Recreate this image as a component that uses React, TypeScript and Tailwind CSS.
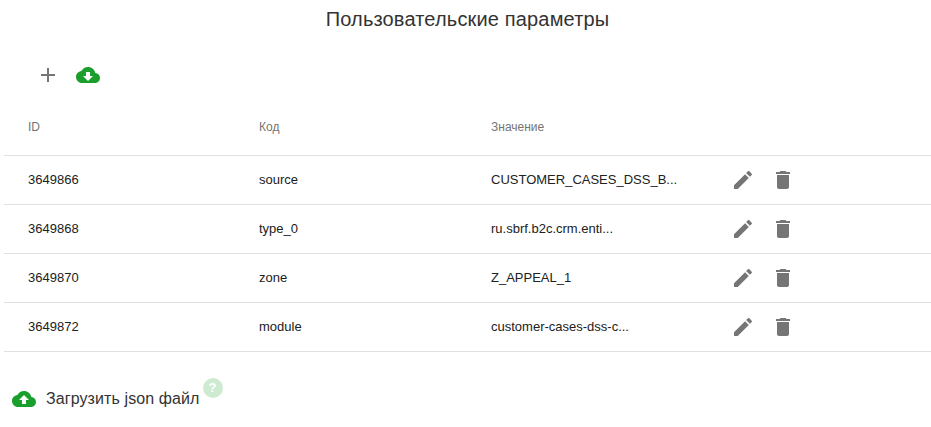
const GREEN = '#1a9f2c'

const rows = [
  { id: '3649866', code: 'source', value: 'CUSTOMER_CASES_DSS_B...' },
  { id: '3649868', code: 'type_0', value: 'ru.sbrf.b2c.crm.enti...' },
  { id: '3649870', code: 'zone', value: 'Z_APPEAL_1' },
  { id: '3649872', code: 'module', value: 'customer-cases-dss-c...' },
]

const CLOUD = 'M19.35 10.04C18.67 6.59 15.64 4 12 4 9.11 4 6.6 5.64 5.35 8.04 2.34 8.36 0 10.91 0 14c0 3.31 2.69 6 6 6h13c2.76 0 5-2.24 5-5 0-2.64-2.05-4.78-4.65-4.96z'

function Icon({ d, className, fill }: { d: string; className: string; fill?: string }) {
  return (
    <svg viewBox="0 0 24 24" className={className} fill={fill ?? 'currentColor'}>
      <path d={d} />
    </svg>
  )
}

export default function App() {
  return (
    <div className="w-[931px] h-[427px] overflow-hidden bg-white font-['Liberation_Sans',Arial,sans-serif] text-[#212121]">
      <h1 className="pt-[6px] pl-[4px] h-[46px] text-center text-[20px] leading-[26px] tracking-[0.16px] font-normal text-[#333]">
        Пользовательские параметры
      </h1>

      <div className="flex items-center h-[48px] pl-[36px] gap-[16px] mt-[5px]">
        <Icon className="w-6 h-6 text-[#757575]" d="M19 13h-6v6h-2v-6H5v-2h6V5h2v6h6v2z" />
        <Icon
          className="w-6 h-6"
          fill={GREEN}
          d={`${CLOUD}M17 13l-5 5-5-5h3V9h4v4h3z`}
        />
      </div>

      <div className="ml-1 mt-[2px]">
        <div className="grid grid-cols-[231px_232px_242px_1fr] items-center h-[55px] pb-[2px] border-b border-[#e0e0e0] text-[12px] text-[#757575]">
          <span className="pl-6">ID</span>
          <span className="pl-6">Код</span>
          <span className="pl-6">Значение</span>
        </div>
        {rows.map(r => (
          <div
            key={r.id}
            className="grid grid-cols-[231px_232px_242px_1fr] items-center h-[49px] border-b border-[#e0e0e0] text-[13px]"
          >
            <span className="pl-6">{r.id}</span>
            <span className="pl-6">{r.code}</span>
            <span className="pl-6">{r.value}</span>
            <div className="flex items-center gap-[16px] pl-[22px] text-[#757575]">
              <Icon
                className="w-6 h-6"
                d="M3 17.25V21h3.75L17.81 9.94l-3.75-3.75L3 17.25zM20.71 7.04c.39-.39.39-1.02 0-1.41l-2.34-2.34c-.39-.39-1.02-.39-1.41 0l-1.83 1.83 3.75 3.75 1.83-1.83z"
              />
              <Icon
                className="w-6 h-6"
                d="M6 19c0 1.1.9 2 2 2h8c1.1 0 2-.9 2-2V7H6v12zM19 4h-3.5l-1-1h-5l-1 1H5v2h14V4z"
              />
            </div>
          </div>
        ))}
      </div>

      <div className="flex items-start pl-[12px] mt-[26px]">
        <Icon
          className="w-6 h-6 mt-[9px]"
          fill={GREEN}
          d={`${CLOUD}M14 13v4h-4v-4H7l5-5 5 5h-3z`}
        />
        <span className="ml-[10px] mt-[10px] text-[16px] leading-[22px] tracking-[0.1px] text-[#333]">Загрузить json файл</span>
        <span className="ml-[3px] w-5 h-5 rounded-full bg-[#cdebd1] text-white text-[13px] font-bold flex items-center justify-center">
          ?
        </span>
      </div>
    </div>
  )
}
